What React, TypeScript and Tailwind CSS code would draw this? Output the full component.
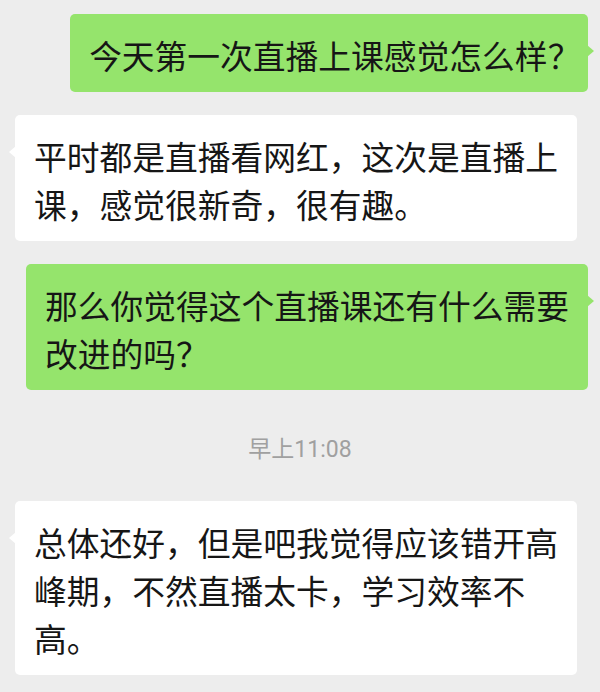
import React from "react";

type Msg =
    | { kind: "me" | "them"; text: string; narrowQ?: boolean }
    | { kind: "time"; text: string };

const messages: Msg[] = [
    { kind: "me", text: "今天第一次直播上课感觉怎么样？", narrowQ: true },
    { kind: "them", text: "平时都是直播看网红，这次是直播上课，感觉很新奇，很有趣。" },
    { kind: "me", text: "那么你觉得这个直播课还有什么需要改进的吗？" },
    { kind: "time", text: "早上11:08" },
    { kind: "them", text: "总体还好，但是吧我觉得应该错开高峰期，不然直播太卡，学习效率不高。" },
];

function Bubble({ mine, text, narrowQ }: { mine: boolean; text: string; narrowQ?: boolean }) {
    // on a single line the trailing question mark is drawn narrow in the screenshot
    const body = narrowQ ? text.slice(0, -1) : text;
    return (
        <div className={`relative max-w-[562px] rounded-[5px] pl-[19px] pr-[19px] pt-[17px] pb-[13px] text-[32.75px] leading-[48px] text-[#161616] ${mine ? "bg-[#95e46c]" : "bg-white"}`}>
            {body}
            {narrowQ && <span className="mr-[5px] [font-feature-settings:'palt']">？</span>}
            {mine ? (
                <span className="absolute top-[31px] -right-[6px] h-0 w-0 border-y-[6px] border-l-[7px] border-y-transparent border-l-[#95e46c]" />
            ) : (
                <span className="absolute top-[31px] -left-[6px] h-0 w-0 border-y-[6px] border-r-[7px] border-y-transparent border-r-white" />
            )}
        </div>
    );
}

export default function App() {
    return (
        <div
            className="flex min-h-screen flex-col bg-[#ededed] pt-[14px]"
            style={{ fontFamily: '"Noto Sans CJK SC", "Noto Sans", sans-serif' }}
        >
            {messages.map((m, i) => {
                if (m.kind === "time") {
                    return (
                        <div key={i} className="mt-[45px] mb-[36px] text-center text-[23px] leading-[30px] text-[#a0a0a0]" style={{ fontFamily: 'Roboto, "Noto Sans CJK SC", sans-serif' }}>
                            {m.text}
                        </div>
                    );
                }
                const prev = messages[i - 1];
                const gap = i === 0 || prev?.kind === "time" ? "" : "mt-[23px]";
                return (
                    <div key={i} className={`flex ${gap} ${m.kind === "me" ? "justify-end pr-[12px]" : "justify-start pl-[15px]"}`}>
                        <Bubble mine={m.kind === "me"} text={m.text} narrowQ={m.narrowQ} />
                    </div>
                );
            })}
        </div>
    );
}
